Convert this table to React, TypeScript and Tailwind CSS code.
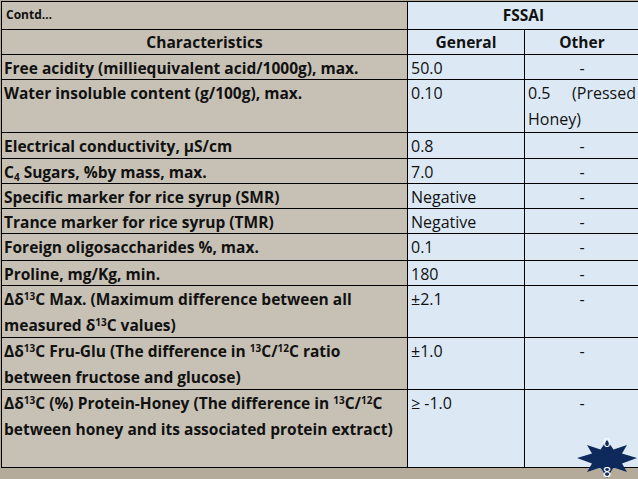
import React from "react";

type Row = {
  label: React.ReactNode;
  general: string;
  other: string;
  h: string;
  justify?: boolean;
};

const Sup = ({ children }: { children: React.ReactNode }) => (
  <sup className="text-[10px]">{children}</sup>
);

const rows: Row[] = [
  { label: "Free acidity (milliequivalent acid/1000g), max.", general: "50.0", other: "-", h: "h-[25px]" },
  { label: "Water insoluble content (g/100g), max.", general: "0.10", other: "0.5 (Pressed Honey)", h: "h-[53px]", justify: true },
  { label: "Electrical conductivity, µS/cm", general: "0.8", other: "-", h: "h-[26px]" },
  {
    label: (
      <>
        C<sub className="text-[10px]">4</sub> Sugars, %by mass, max.
      </>
    ),
    general: "7.0",
    other: "-",
    h: "h-[25px]",
  },
  { label: "Specific marker for rice syrup (SMR)", general: "Negative", other: "-", h: "h-[25px]" },
  { label: "Trance marker for rice syrup (TMR)", general: "Negative", other: "-", h: "h-[25px]" },
  { label: "Foreign oligosaccharides %, max.", general: "0.1", other: "-", h: "h-[27px]" },
  { label: "Proline, mg/Kg, min.", general: "180", other: "-", h: "h-[25px]" },
  {
    label: (
      <>
        Δδ<Sup>13</Sup>C Max. (Maximum difference between all measured δ<Sup>13</Sup>C values)
      </>
    ),
    general: "±2.1",
    other: "-",
    h: "h-[52px]",
  },
  {
    label: (
      <>
        Δδ<Sup>13</Sup>C Fru-Glu (The difference in <Sup>13</Sup>C/<Sup>12</Sup>C ratio between fructose and glucose)
      </>
    ),
    general: "±1.0",
    other: "-",
    h: "h-[52px]",
  },
  {
    label: (
      <>
        Δδ<Sup>13</Sup>C (%) Protein-Honey (The difference in <Sup>13</Sup>C/<Sup>12</Sup>C between honey and its
        associated protein extract)
      </>
    ),
    general: "≥ -1.0",
    other: "-",
    h: "h-[78px]",
  },
];

const tan = "bg-[#c7c1b5]";
const blue = "bg-[#dce9f5]";

export default function App() {
  return (
    <div className="relative w-[638px] h-[479px] overflow-hidden bg-[#b5ab9b] font-['Open_Sans',sans-serif] text-[16px] leading-[26px] text-[#111]">
      <div className="w-[640px] pt-px pl-px">
        <div className="border-l border-t border-black">
          <div className="grid grid-cols-[406px_1fr] grid-rows-[minmax(0,1fr)] h-[28px]">
            <div className={`${tan} border-r border-b border-black px-[4px] pt-[3px] text-[12px] leading-[20px] font-bold`}>
              Contd…
            </div>
            <div className={`${blue} border-r border-b border-black text-center font-bold text-[15.5px] leading-[26px]`}>
              FSSAI
            </div>
          </div>
          <div className="grid grid-cols-[406px_117px_1fr] grid-rows-[minmax(0,1fr)] h-[25px] font-bold text-[15.5px] leading-[24px]">
            <div className={`${tan} border-r border-b border-black text-center`}>Characteristics</div>
            <div className={`${blue} border-r border-b border-black text-center`}>General</div>
            <div className={`${blue} border-r border-b border-black text-center`}>Other</div>
          </div>
          {rows.map((r, i) => (
            <div key={i} className={`grid grid-cols-[406px_117px_1fr] grid-rows-[minmax(0,1fr)] ${r.h}`}>
              <div className={`${tan} border-r border-b border-black pl-[2px] pr-2 font-bold text-[15.5px]`}>
                {r.label}
              </div>
              <div className={`${blue} border-r border-b border-black pl-[3px]`}>{r.general}</div>
              <div
                className={`${blue} border-r border-b border-black px-[3px] ${
                  r.justify ? "text-justify" : "text-center"
                }`}
              >
                {r.other}
              </div>
            </div>
          ))}
        </div>
      </div>
      <div className="absolute left-[576px] top-[436px] w-[62px] h-[44px]">
        <svg viewBox="0 0 62 44" className="absolute inset-0 w-full h-full" preserveAspectRatio="none">
          <polygon
            points="31,4 37.5,13.5 51,9 46,17.5 61,22 46,27.5 51,36 37.5,31.5 31,42 24.5,31.5 11,36 16,27.5 1,22 16,17.5 11,9 24.5,13.5"
            fill="#0e2a5c"
          />
        </svg>
        <div className="absolute left-0 right-0 top-[0px] text-center text-white text-[13px] leading-[13px]">0</div>
        <div className="absolute left-0 right-0 top-[28px] text-center text-white text-[15px] leading-[15px]">8</div>
      </div>
    </div>
  );
}
